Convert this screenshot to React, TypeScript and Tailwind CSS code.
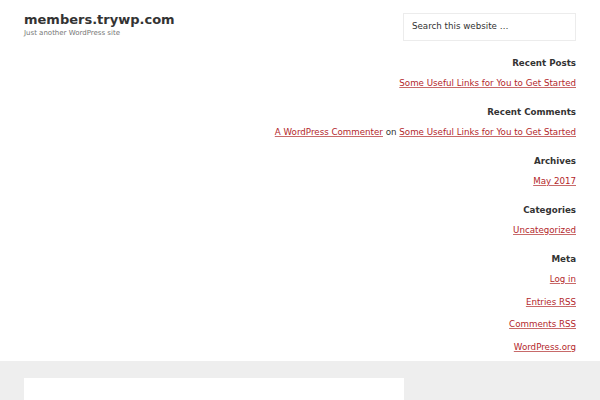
import React from 'react';

const linkCls = 'text-[#b3262a] underline decoration-[#c76a6a]';

const widgets: { title: string; links: React.ReactNode[] }[] = [
    { title: 'Recent Posts', links: [<a key="p" href="#" className={linkCls}>Some Useful Links for You to Get Started</a>] },
    {
        title: 'Recent Comments',
        links: [
            <span key="c">
                <a href="#" className={linkCls}>A WordPress Commenter</a> on{' '}
                <a href="#" className={linkCls}>Some Useful Links for You to Get Started</a>
            </span>,
        ],
    },
    { title: 'Archives', links: [<a key="a" href="#" className={linkCls}>May 2017</a>] },
    { title: 'Categories', links: [<a key="u" href="#" className={linkCls}>Uncategorized</a>] },
    {
        title: 'Meta',
        links: ['Log in', 'Entries RSS', 'Comments RSS', 'WordPress.org'].map(l => (
            <a key={l} href="#" className={linkCls}>{l}</a>
        )),
    },
];

export default function App() {
    return (
        <div className="w-[600px] h-[400px] overflow-hidden bg-[#eeeeee] text-[#333333]" style={{ fontFamily: '"DejaVu Sans", sans-serif' }}>
            {/* Header */}
            <header className="bg-white h-[361px] flex justify-between pl-6 pr-6">
                <div className="pt-[12px]">
                    <h1 className="text-[13px] font-bold leading-[16px] text-[#333]">members.trywp.com</h1>
                    <p className="text-[7px] leading-[10px] text-[#777]">Just another WordPress site</p>
                </div>
                <aside className="w-[173px] pt-[13px] text-right text-[8.7px]">
                    <div className="h-[28px] border border-[#ececec] flex items-center pl-[8px] text-left text-[#333] font-medium">
                        Search this website …
                    </div>
                    <div className="flex flex-col items-end mt-[16px]">
                        {widgets.map(w => (
                            <section key={w.title} className="mb-[17px] flex flex-col items-end">
                                <h4 className="font-bold leading-[12px] whitespace-nowrap">{w.title}</h4>
                                <ul className="mt-[8px] flex flex-col items-end gap-[10.5px]">
                                    {w.links.map((l, i) => (
                                        <li key={i} className="leading-[12px] whitespace-nowrap">{l}</li>
                                    ))}
                                </ul>
                            </section>
                        ))}
                    </div>
                </aside>
            </header>

            {/* Content */}
            <div className="pl-6 pt-[17px]">
                <div className="w-[380px] h-[40px] bg-white" />
            </div>
        </div>
    );
}
